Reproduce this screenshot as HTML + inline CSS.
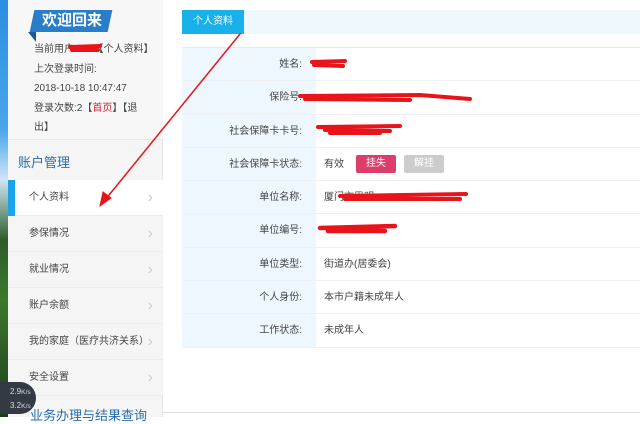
<!DOCTYPE html>
<html><head><meta charset="utf-8"><style>
*{margin:0;padding:0;box-sizing:border-box}
body{width:640px;height:417px;overflow:hidden;background:#fff;font-family:"Liberation Sans","Noto Sans CJK SC",sans-serif;font-size:10px;color:#444;position:relative}
.strip{position:absolute;left:0;top:0;width:8px;height:417px;background:linear-gradient(#2a8fe0 0,#4aa6ea 130px,#cfe6f5 180px,#2d5d2a 240px,#3b7a2c 300px,#1c3d18 417px)}
.side{position:absolute;left:8px;top:0;width:155px;height:417px;background:#f5f5f5;border-right:1px solid #e6e6e6}
.top{position:absolute;left:0;top:0;width:155px;height:140px;background:#f7f7f7;border-bottom:1px solid #e8e8e8}
.badge{position:absolute;left:24px;top:10px;width:78px;height:22px;background:#2a7dc9;color:#fff;font-size:15px;font-weight:bold;line-height:22px;padding-left:10px;transform:skewX(-12deg)}
.badge span{display:inline-block;transform:skewX(12deg)}
.fold{position:absolute;left:20px;top:32px;width:0;height:0;border-top:10px solid #1b5a99;border-left:8px solid transparent}
.info{position:absolute;left:26px;top:40px;line-height:19.5px;font-size:10px;color:#444;width:125px}
.red{color:#d23}
.acct{position:absolute;left:10px;top:152px;font-size:13px;color:#2a6cb0}
.menu{position:absolute;left:8px;top:180px;width:155px}
.mi{height:36px;border-bottom:1px solid #ebebeb;line-height:36px;padding-left:21px;font-size:10px;color:#444;position:relative;background:#f5f5f5}
.mi.act{background:#fff}
.mi.act:before{content:"";position:absolute;left:0;top:0;width:7px;height:36px;background:#1aa5ea}
.mi:after{content:"›";position:absolute;right:10px;top:0;color:#ccc;font-size:16px}
.speed{position:absolute;left:0;top:382px;width:36px;height:32px;background:#333a44;border-radius:0 16px 16px 0;color:#ddd;font-size:8px;line-height:13px;padding:3px 0 0 10px}
.last{position:absolute;left:30px;top:405px;font-size:13px;color:#2a6cb0}
.hdr{position:absolute;left:182px;top:10px;width:458px;height:24px;background:#eef7fc}
.tab{position:absolute;left:182px;top:10px;width:62px;height:24px;background:#1ab0ea;color:#fff;font-size:10px;line-height:24px;text-align:center}
.tbl{position:absolute;left:182px;top:47px;width:458px;border-top:1px solid #eaeaea}
.row{height:33.3px;border-bottom:1px solid #eef0f2;display:flex;font-size:10px}
.l{width:134px;background:#eef7fd;text-align:right;padding-right:14px;line-height:33px;color:#444}
.v{flex:1;padding-left:8px;line-height:33px;color:#444}
.btn{display:inline-block;width:40px;height:18px;line-height:18px;text-align:center;color:#fff;border-radius:2px;margin-left:12px;vertical-align:middle;font-size:10px}
.bot{position:absolute;left:163px;top:412px;width:477px;height:1px;background:#ddd}
svg{position:absolute;left:0;top:0}
</style></head><body>
<div class="strip"></div>
<div class="side">
 <div class="top">
  <div class="fold"></div>
  <div class="badge"><span>欢迎回来</span></div>
  <div class="info">当前用户:&nbsp;&nbsp;&nbsp;&nbsp;&nbsp;&nbsp;【个人资料】<br>上次登录时间:<br>2018-10-18 10:47:47<br>登录次数:2【<span class="red">首页</span>】【退<br>出】</div>
 </div>
 <div class="acct">账户管理</div>
</div>
<div class="menu">
 <div class="mi act">个人资料</div>
 <div class="mi">参保情况</div>
 <div class="mi">就业情况</div>
 <div class="mi">账户余额</div>
 <div class="mi">我的家庭（医疗共济关系）</div>
 <div class="mi">安全设置</div>
</div>
<div class="last">业务办理与结果查询</div>
<div class="speed">2.9<small>K/s</small><br>3.2<small>K/s</small></div>
<div class="hdr"></div>
<div class="tab">个人资料</div>
<div class="tbl">
 <div class="row"><div class="l">姓名:</div><div class="v"></div></div>
 <div class="row"><div class="l">保险号:</div><div class="v"></div></div>
 <div class="row"><div class="l">社会保障卡卡号:</div><div class="v"></div></div>
 <div class="row"><div class="l">社会保障卡状态:</div><div class="v">有效<span class="btn" style="background:#dc3d6a">挂失</span><span class="btn" style="background:#ccc;margin-left:8px">解挂</span></div></div>
 <div class="row"><div class="l">单位名称:</div><div class="v">厦门市思明</div></div>
 <div class="row"><div class="l">单位编号:</div><div class="v"></div></div>
 <div class="row"><div class="l">单位类型:</div><div class="v">街道办(居委会)</div></div>
 <div class="row"><div class="l">个人身份:</div><div class="v">本市户籍未成年人</div></div>
 <div class="row"><div class="l">工作状态:</div><div class="v">未成年人</div></div>
</div>
<div class="bot"></div>
<svg width="640" height="417">
 <g stroke="#e8141a" stroke-linecap="round" fill="none">
  <path d="M70 47 L100 46 M72 50 L98 50" stroke-width="4"/>
  <path d="M312 62 L345 61 M314 65 L343 66" stroke-width="4"/>
  <path d="M300 96 L420 95 L470 99 M305 99 L410 100" stroke-width="4"/>
  <path d="M318 127 L400 126 M325 130 L390 131 M330 133 L380 133" stroke-width="4"/>
  <path d="M340 196 L466 194 M345 199 L460 199" stroke-width="4"/>
  <path d="M320 228 L395 226 M328 231 L385 231" stroke-width="4.5"/>
  <path d="M240 34 L105 200" stroke-width="1.5"/>
  <path d="M100 206 L103 192 L111 198 Z" fill="#e8141a" stroke-width="1"/>
 </g>
</svg>
</body></html>
